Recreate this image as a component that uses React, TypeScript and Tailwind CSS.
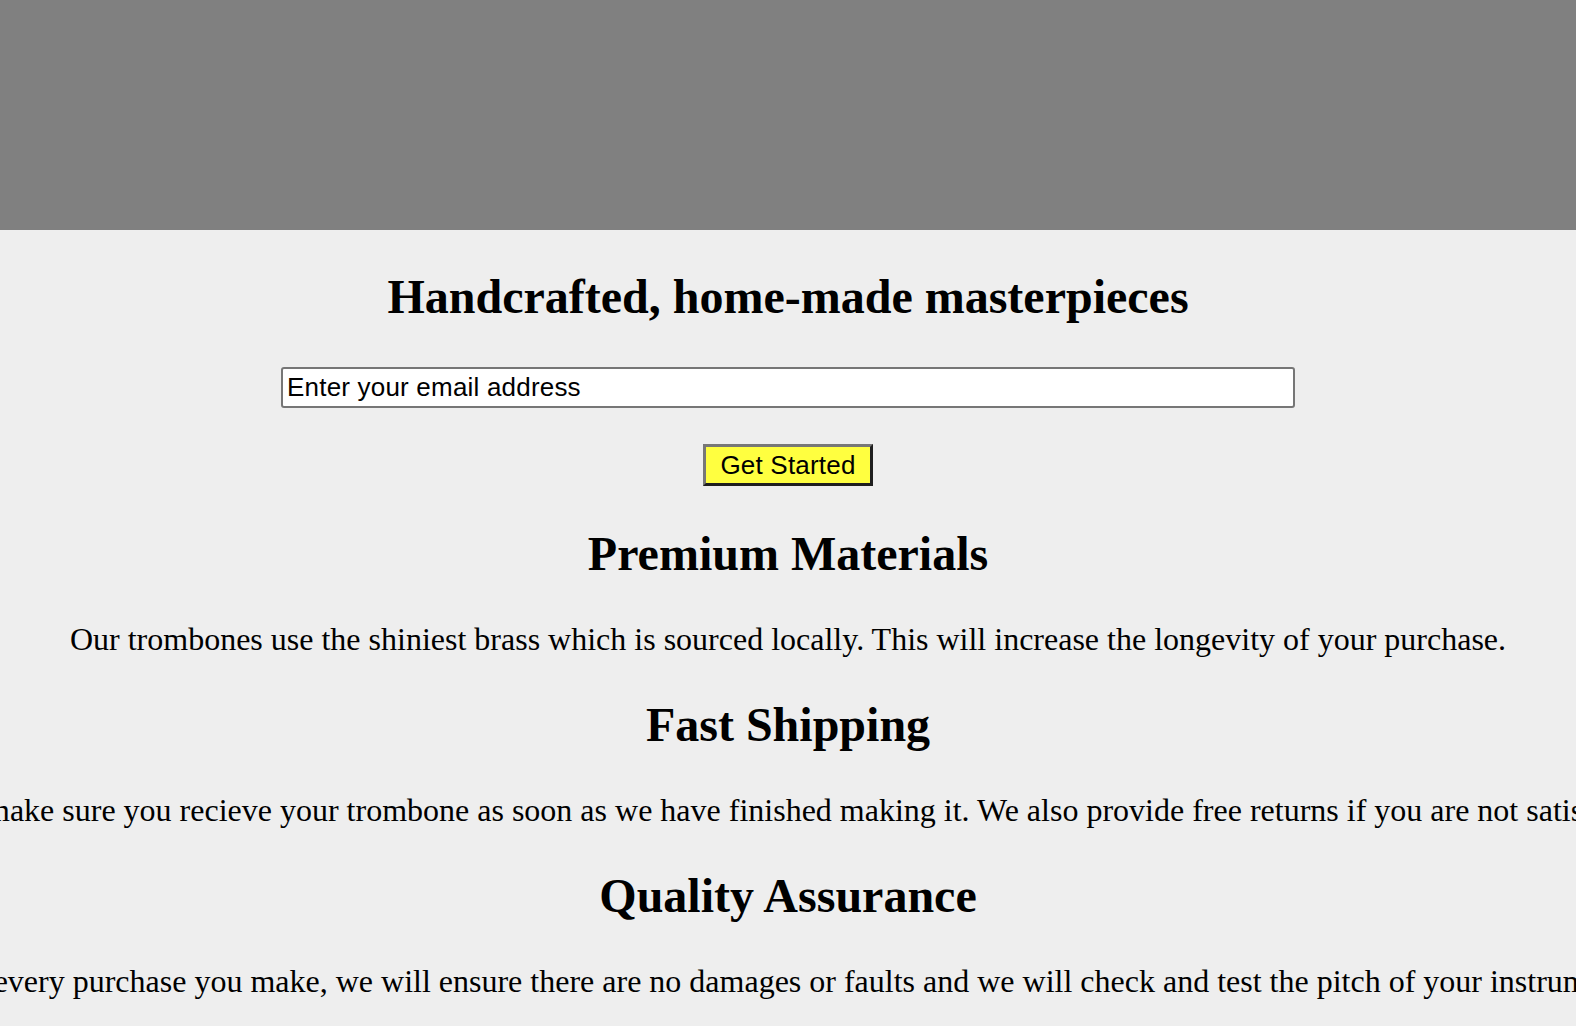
const features = [
  {
    title: 'Premium Materials',
    text: 'Our trombones use the shiniest brass which is sourced locally. This will increase the longevity of your purchase.',
  },
  {
    title: 'Fast Shipping',
    text: 'We make sure you recieve your trombone as soon as we have finished making it. We also provide free returns if you are not satisfied.',
  },
  {
    title: 'Quality Assurance',
    text: 'For every purchase you make, we will ensure there are no damages or faults and we will check and test the pitch of your instrument.',
  },
];

const App: React.FC = () => (
  <div className="min-h-screen overflow-x-hidden bg-[#eeeeee] text-black font-['Liberation_Serif',_'Times_New_Roman',_serif]">
    <header className="h-[230px] bg-[#808080]" />
    <main className="flex flex-col items-center">
      <h1 className="mt-[39px] text-[48px] leading-[56px] font-bold">Handcrafted, home-made masterpieces</h1>
      <form className="flex flex-col items-center mb-0.5" onSubmit={(e) => e.preventDefault()}>
        <input
          type="email"
          placeholder="Enter your email address"
          className="mt-[42px] w-[1014px] h-[41px] px-1 bg-white border-2 border-[#767676] rounded-[3px] font-['Liberation_Sans',_Arial,_sans-serif] text-[26px] tracking-[0.2px] placeholder:text-black outline-none"
        />
        <button
          type="submit"
          className="mt-9 w-[170px] h-[42px] bg-[#ffff40] border-[3px] border-t-[#777777] border-l-[#777777] border-b-[#1f1f1f] border-r-[#1f1f1f] font-['Liberation_Sans',_Arial,_sans-serif] text-[26px] tracking-[0.2px] leading-[30px] text-black"
        >
          Get Started
        </button>
      </form>
      {features.map((f) => (
        <section key={f.title} className="flex flex-col items-center">
          <h2 className="mt-[38px] text-[48px] leading-[56px] font-bold">{f.title}</h2>
          <p className="mt-[37px] text-[32px] leading-[40px] whitespace-nowrap">{f.text}</p>
        </section>
      ))}
    </main>
  </div>
);

export default App;
